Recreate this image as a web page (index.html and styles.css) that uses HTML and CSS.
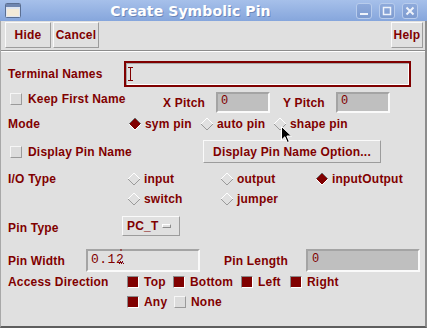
FILE: index.html
```html
<!DOCTYPE html>
<html lang="en">
<head>
    <meta charset="UTF-8">
    <title>Create Symbolic Pin</title>
    <link rel="stylesheet" href="styles.css">
</head>
<body>
    <div class="window">
        <div class="titlebar">
            <svg class="app-icon" width="16" height="15" viewBox="0 0 16 15">
                <rect x="0.5" y="0.5" width="15" height="14" rx="1" fill="#dfe6f2" stroke="#5b6f92"/>
                <rect x="1" y="1" width="14" height="3" fill="#6f86b0"/>
                <rect x="2" y="6" width="12" height="7" fill="#f3ead8"/>
            </svg>
            <div class="title">Create Symbolic Pin</div>
            <div class="wm-buttons">
                <span class="wm-btn">
                    <svg width="16" height="16" viewBox="0 0 16 16"><rect x="4" y="10" width="8" height="2" fill="#eef3fb"/></svg>
                </span>
                <span class="wm-btn">
                    <svg width="16" height="16" viewBox="0 0 16 16"><rect x="4.5" y="4.5" width="7" height="7" fill="none" stroke="#eef3fb" stroke-width="1.5"/></svg>
                </span>
                <span class="wm-btn">
                    <svg width="16" height="16" viewBox="0 0 16 16"><path d="M4.5 4.5 L11.5 11.5 M11.5 4.5 L4.5 11.5" stroke="#eef3fb" stroke-width="2"/></svg>
                </span>
            </div>
        </div>

        <div class="client">
            <div class="toolbar">
                <button class="btn btn-hide">Hide</button>
                <button class="btn btn-cancel">Cancel</button>
                <span class="spacer"></span>
                <button class="btn btn-help">Help</button>
            </div>

            <div class="form">
                <!-- Terminal Names -->
                <div class="row row-terminal">
                    <span class="label w-terminal">Terminal Names</span>
                    <div class="terminal-input">
                        <svg class="ibeam" width="5" height="14" viewBox="0 0 5 14">
                            <path d="M0 0.5 H5 M2.5 0.5 V13.5 M0 13.5 H5" stroke="#800000" stroke-width="1"/>
                        </svg>
                    </div>
                </div>

                <!-- Keep First Name / Pitch -->
                <div class="row row-keep">
                    <label class="check-group keep">
                        <span class="checkbox"></span>
                        <span class="label">Keep First Name</span>
                    </label>
                    <span class="label w-pitch">X Pitch</span>
                    <div class="field field-pitch">0</div>
                    <span class="label w-pitch y-pitch">Y Pitch</span>
                    <div class="field field-pitch">0</div>
                </div>

                <!-- Mode -->
                <div class="row row-mode">
                    <span class="label w-mode">Mode</span>
                    <span class="radio w-sym"><svg class="diamond on" width="14" height="14" viewBox="0 0 14 14"><polygon points="7,1 13,7 7,13 1,7" fill="#800000"/><polyline points="1,7 7,1 13,7" fill="none" stroke="#6e6e6e"/><polyline points="1,7 7,13 13,7" fill="none" stroke="#ffffff"/></svg><span class="label">sym pin</span></span>
                    <span class="radio w-auto"><svg class="diamond" width="14" height="14" viewBox="0 0 14 14"><polyline points="1,7 7,1 13,7" fill="none" stroke="#ffffff"/><polyline points="1,7 7,13 13,7" fill="none" stroke="#9a9a9a"/></svg><span class="label">auto pin</span></span>
                    <span class="radio"><svg class="diamond" width="14" height="14" viewBox="0 0 14 14"><polyline points="1,7 7,1 13,7" fill="none" stroke="#ffffff"/><polyline points="1,7 7,13 13,7" fill="none" stroke="#9a9a9a"/></svg><span class="label">shape pin</span></span>
                </div>

                <!-- Display Pin Name -->
                <div class="row row-display">
                    <label class="check-group w-display">
                        <span class="checkbox"></span>
                        <span class="label">Display Pin Name</span>
                    </label>
                    <button class="btn btn-option">Display Pin Name Option...</button>
                </div>

                <!-- I/O Type -->
                <div class="row row-io">
                    <span class="label w-io">I/O Type</span>
                    <span class="radio w-input"><svg class="diamond" width="14" height="14" viewBox="0 0 14 14"><polyline points="1,7 7,1 13,7" fill="none" stroke="#ffffff"/><polyline points="1,7 7,13 13,7" fill="none" stroke="#9a9a9a"/></svg><span class="label">input</span></span>
                    <span class="radio w-output"><svg class="diamond" width="14" height="14" viewBox="0 0 14 14"><polyline points="1,7 7,1 13,7" fill="none" stroke="#ffffff"/><polyline points="1,7 7,13 13,7" fill="none" stroke="#9a9a9a"/></svg><span class="label">output</span></span>
                    <span class="radio"><svg class="diamond on" width="14" height="14" viewBox="0 0 14 14"><polygon points="7,1 13,7 7,13 1,7" fill="#800000"/><polyline points="1,7 7,1 13,7" fill="none" stroke="#6e6e6e"/><polyline points="1,7 7,13 13,7" fill="none" stroke="#ffffff"/></svg><span class="label">inputOutput</span></span>
                </div>
                <div class="row row-io2">
                    <span class="w-io"></span>
                    <span class="radio w-input"><svg class="diamond" width="14" height="14" viewBox="0 0 14 14"><polyline points="1,7 7,1 13,7" fill="none" stroke="#ffffff"/><polyline points="1,7 7,13 13,7" fill="none" stroke="#9a9a9a"/></svg><span class="label">switch</span></span>
                    <span class="radio"><svg class="diamond" width="14" height="14" viewBox="0 0 14 14"><polyline points="1,7 7,1 13,7" fill="none" stroke="#ffffff"/><polyline points="1,7 7,13 13,7" fill="none" stroke="#9a9a9a"/></svg><span class="label">jumper</span></span>
                </div>

                <!-- Pin Type -->
                <div class="row row-type">
                    <span class="label w-type">Pin Type</span>
                    <button class="btn btn-menu">PC_T <span class="menu-mark"></span></button>
                </div>

                <!-- Pin Width / Length -->
                <div class="row row-width">
                    <span class="label w-width">Pin Width</span>
                    <div class="field field-light">0.12<svg class="caret" width="6" height="16" viewBox="0 0 6 16"><path d="M2 1 H4 M1 14.5 H2 M3 14.5 H4 M5 14.5 H6 M2 12.5 H3 M4 12.5 H5" stroke="#800000" stroke-width="1"/></svg></div>
                    <span class="label w-length">Pin Length</span>
                    <div class="field field-length">0</div>
                </div>

                <!-- Access Direction -->
                <div class="row row-access">
                    <span class="label w-access">Access Direction</span>
                    <label class="check-group w-top"><span class="checkbox on"></span><span class="label">Top</span></label>
                    <label class="check-group w-bottom"><span class="checkbox on"></span><span class="label">Bottom</span></label>
                    <label class="check-group w-left"><span class="checkbox on"></span><span class="label">Left</span></label>
                    <label class="check-group"><span class="checkbox on"></span><span class="label">Right</span></label>
                </div>
                <div class="row row-access2">
                    <span class="w-access"></span>
                    <label class="check-group w-any"><span class="checkbox on"></span><span class="label">Any</span></label>
                    <label class="check-group"><span class="checkbox"></span><span class="label">None</span></label>
                </div>
            </div>
        </div>

        <!-- mouse pointer over the dialog -->
        <svg class="pointer" width="12" height="18" viewBox="0 0 12 18">
            <path d="M0.5 0.5 L0.5 14 L3.8 10.8 L6.3 16.5 L8.3 15.6 L5.9 10 L10.5 10 Z" fill="#000" stroke="#fff" stroke-width="1"/>
        </svg>
    </div>
</body>
</html>
```

FILE: styles.css
```css
* {
    margin: 0;
    padding: 0;
    box-sizing: border-box;
}

body {
    background: #e6e6e6;
    font-family: "Liberation Sans", Arial, sans-serif;
}

.window {
    position: relative;
    width: 427px;
    height: 328px;
    background: #e6e6e6;
}

/* title bar */
.titlebar {
    height: 21px;
    display: flex;
    align-items: center;
    background: linear-gradient(#a6c0ea, #86a6dc);
}

.app-icon {
    margin-left: 5px;
    flex: none;
}

.title {
    flex: 1;
    text-align: center;
    color: #fff;
    font-family: "DejaVu Sans", sans-serif;
    font-weight: bold;
    font-size: 14px;
    letter-spacing: 0.1px;
    text-shadow: 1px 1px 0 rgba(40, 60, 110, 0.35);
    padding-left: 4px;
}

.wm-buttons {
    display: flex;
    gap: 7px;
    margin-right: 9px;
}

.wm-btn {
    width: 16px;
    height: 16px;
    border-radius: 3px;
    border: 1px solid #b8ccec;
    background: linear-gradient(#8eaadb, #7d9bd0);
    display: flex;
}

.wm-btn svg {
    margin: -1px;
}

/* client area */
.client {
    height: 307px;
    background: #e0e0e0;
    border-left: 1px solid #a8a8a8;
    border-right: 2px solid #8c8c8c;
    border-bottom: 2px solid #5e5e5e;
}

.toolbar {
    height: 30px;
    display: flex;
    align-items: flex-start;
    padding: 1px 2px 0 4px;
    gap: 2px;
    border-bottom: 1px solid #8c8c8c;
}

.spacer {
    flex: 1;
}

.btn {
    font-family: "Liberation Sans", Arial, sans-serif;
    font-weight: bold;
    font-size: 12px;
    letter-spacing: 0.2px;
    color: #800000;
    background: #e0e0e0;
    border-top: 1px solid #fafafa;
    border-left: 1px solid #fafafa;
    border-right: 1px solid #9c9c9c;
    border-bottom: 1px solid #9c9c9c;
    display: flex;
    align-items: center;
    justify-content: center;
}

.toolbar .btn {
    height: 26px;
}

.btn-hide,
.btn-cancel {
    width: 46px;
}

.btn-help {
    width: 32px;
}

.form {
    border-top: 1px solid #fff;
    padding-left: 7px;
}

.row {
    display: flex;
    align-items: center;
}

.label {
    font-weight: bold;
    font-size: 12px;
    letter-spacing: 0.2px;
    color: #800000;
    white-space: nowrap;
    flex: none;
}

/* rows, top to bottom */
.row-terminal { margin-top: 9px; height: 26px; }
.row-keep     { margin-top: 4px; height: 22px; }
.row-mode     { margin-top: 3px; height: 16px; }
.row-display  { margin-top: 8px; height: 23px; }
.row-io       { margin-top: 9px; height: 14px; }
.row-io2      { margin-top: 6px; height: 14px; }
.row-type     { margin-top: 12px; height: 20px; }
.row-width    { margin-top: 11px; height: 23px; }
.row-access   { margin-top: 4px; height: 12px; }
.row-access2  { margin-top: 8px; height: 12px; }

/* column widths */
.w-terminal { width: 116px; }
.w-mode     { width: 120px; }
.w-sym      { width: 72px; }
.w-auto     { width: 73px; }
.w-display  { width: 195px; }
.w-io       { width: 119px; flex: none; }
.w-input    { width: 93px; }
.w-output   { width: 95px; }
.w-type     { width: 114px; }
.w-width    { width: 78px; }
.w-length   { width: 82px; margin-left: 24px; }
.w-access   { width: 119px; flex: none; }
.w-top      { width: 46px; }
.w-bottom   { width: 68px; }
.w-left     { width: 49px; }
.w-any      { width: 47px; }
.w-pitch    { width: 53px; margin-top: 1px; }
.y-pitch    { margin-left: 13px; }

.terminal-input {
    width: 287px;
    height: 26px;
    border: 2px solid #800000;
    background: #e0e0e0;
    box-shadow: inset 1px 1px 0 #a8a8a8, inset -1px -1px 0 #fff;
    display: flex;
    align-items: center;
    padding-left: 2px;
}

.check-group {
    display: flex;
    align-items: center;
    gap: 5px;
    flex: none;
}

.keep {
    width: 155px;
    padding-left: 2px;
    gap: 6px;
    align-self: flex-start;
    margin-top: 1px;
}

.w-display {
    padding-left: 2px;
    gap: 6px;
}

.checkbox {
    width: 12px;
    height: 12px;
    flex: none;
    background: #dcdcdc;
    border-top: 1px solid #f6f6f6;
    border-left: 1px solid #f6f6f6;
    border-right: 1px solid #9a9a9a;
    border-bottom: 1px solid #9a9a9a;
}

.checkbox.on {
    background: #800000;
    border-top: 1px solid #8a8a8a;
    border-left: 1px solid #8a8a8a;
    border-right: 1px solid #fff;
    border-bottom: 1px solid #fff;
}

.radio {
    display: flex;
    align-items: center;
    gap: 3px;
    flex: none;
}

.diamond {
    flex: none;
}

.field {
    height: 21px;
    background: #bfbfbf;
    border-top: 2px solid #a4a4a4;
    border-left: 2px solid #a4a4a4;
    border-right: 2px solid #fafafa;
    border-bottom: 2px solid #fafafa;
    font-family: "Liberation Mono", monospace;
    font-size: 12px;
    color: #800000;
    padding-left: 3px;
    line-height: 14px;
    flex: none;
}

.field-pitch {
    width: 54px;
}

.field-light {
    width: 114px;
    height: 23px;
    background: #e0e0e0;
    font-size: 13px;
    letter-spacing: 0.5px;
    padding-left: 3px;
    line-height: 17px;
    display: flex;
    align-items: flex-start;
}

.caret {
    margin-left: -6px;
    margin-top: -2px;
}

.field-length {
    width: 114px;
    height: 23px;
    padding-left: 4px;
    line-height: 16px;
}

.btn-option {
    width: 178px;
    height: 23px;
}

.btn-menu {
    width: 58px;
    height: 20px;
    gap: 4px;
    justify-content: flex-start;
    padding-left: 4px;
    margin-top: -4px;
}

.menu-mark {
    width: 9px;
    height: 4px;
    background: #e0e0e0;
    border-top: 1px solid #fff;
    border-left: 1px solid #fff;
    border-right: 1px solid #8c8c8c;
    border-bottom: 1px solid #8c8c8c;
}

.pointer {
    position: absolute;
    left: 281px;
    top: 126px;
}
```
